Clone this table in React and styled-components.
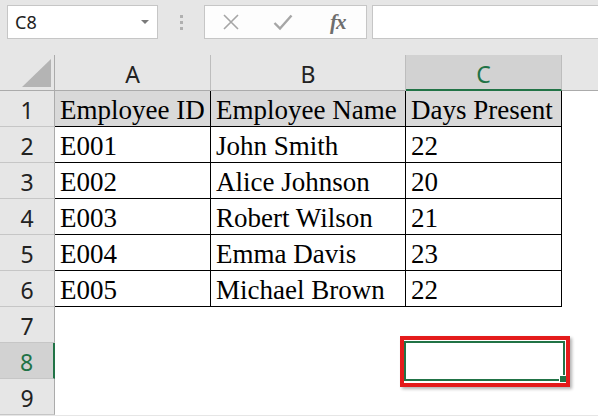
import React from 'react';
import styled, { createGlobalStyle } from 'styled-components';

const GREEN = '#217346';

const GlobalStyle = createGlobalStyle`
  html, body {
    margin: 0;
    padding: 0;
    background: #e6e6e6;
    overflow: hidden;
  }
`;

const Page = styled.div`
  width: 598px;
  height: 416px;
  background: #e6e6e6;
  font-family: "Noto Sans", "Liberation Sans", sans-serif;
`;

const Toolbar = styled.div`
  display: flex;
  align-items: center;
  height: 34px;
  padding: 5px 0 0 7px;
  margin-bottom: 16px;
`;

const NameBox = styled.div`
  box-sizing: border-box;
  width: 151px;
  height: 34px;
  background: #fff;
  border: 1px solid #c6c6c6;
  display: flex;
  align-items: center;
  justify-content: space-between;
  padding: 0 8px 0 7px;
  font-size: 18px;
  color: #222;
`;

const Caret = styled.span`
  width: 0;
  height: 0;
  border-left: 4px solid transparent;
  border-right: 4px solid transparent;
  border-top: 4px solid #7a7a7a;
`;

const Grip = styled.div`
  width: 46px;
  display: flex;
  flex-direction: column;
  align-items: center;
  gap: 3px;
`;

const GripDot = styled.span`
  width: 3px;
  height: 3px;
  background: #b0b0b0;
`;

const FxBox = styled.div`
  box-sizing: border-box;
  width: 163px;
  height: 34px;
  background: #fdfdfd;
  border: 1px solid #c6c6c6;
  display: flex;
  align-items: center;
  padding-left: 17px;
  gap: 33px;
`;

const FxLabel = styled.span`
  font-family: "Liberation Serif", serif;
  font-style: italic;
  font-weight: bold;
  font-size: 21px;
  color: #6e6e6e;
  margin-left: 4px;
  letter-spacing: -1px;
`;

const FormulaInput = styled.div`
  box-sizing: border-box;
  flex: 1;
  height: 34px;
  margin-left: 5px;
  margin-right: -2px;
  background: #fff;
  border: 1px solid #c6c6c6;
`;

const Grid = styled.div`
  display: grid;
  grid-template-columns: 55px 156px 195px 156px 1fr;
  grid-auto-rows: 36px;
`;

const Corner = styled.div`
  box-sizing: border-box;
  border-right: 1px solid #ababab;
  border-bottom: 1px solid #ababab;
  display: flex;
  align-items: flex-end;
  justify-content: flex-end;
  padding: 0 3px 3px 0;
`;

const Triangle = styled.span`
  width: 0;
  height: 0;
  border-left: 29px solid transparent;
  border-bottom: 28px solid #b4b4b4;
`;

const ColHead = styled.div`
  box-sizing: border-box;
  background: ${(p) => (p.$active ? '#d2d2d2' : '#e6e6e6')};
  color: ${(p) => (p.$active ? GREEN : '#222')};
  border-right: ${(p) => (p.$blank ? 'none' : '1px solid #bdbdbd')};
  border-bottom: ${(p) => (p.$active ? `2px solid ${GREEN}` : '1px solid #ababab')};
  display: flex;
  align-items: center;
  justify-content: center;
  padding-top: 3px;
  font-size: 23px;
`;

const RowHead = styled.div`
  box-sizing: border-box;
  background: ${(p) => (p.$active ? '#d2d2d2' : '#e6e6e6')};
  color: ${(p) => (p.$active ? GREEN : '#222')};
  border-right: ${(p) => (p.$active ? `2px solid ${GREEN}` : '1px solid #ababab')};
  border-bottom: 1px solid #c6c6c6;
  display: flex;
  align-items: center;
  justify-content: center;
  padding-top: 2px;
  font-size: 23px;
`;

const Cell = styled.div`
  box-sizing: border-box;
  position: relative;
  z-index: ${(p) => (p.$selected ? 2 : 'auto')};
  background: ${(p) => (p.$head ? '#d9d9d9' : '#fff')};
  border-right: ${(p) => (p.$data ? '1px solid #000' : 'none')};
  border-bottom: ${(p) => (p.$data ? '1px solid #000' : 'none')};
  display: flex;
  align-items: center;
  padding: 4px 0 0 5px;
  font-family: "Liberation Serif", "Times New Roman", serif;
  font-size: 27px;
  color: #000;
  white-space: nowrap;
`;

const Selection = styled.div`
  position: absolute;
  left: -2px;
  top: -2px;
  right: -3px;
  bottom: -2px;
  border: 2px solid ${GREEN};
  pointer-events: none;
`;

const Handle = styled.span`
  position: absolute;
  right: -3px;
  bottom: -3px;
  width: 6px;
  height: 6px;
  background: ${GREEN};
  border-left: 1px solid #fff;
  border-top: 1px solid #fff;
`;

const Highlight = styled.div`
  position: absolute;
  left: -6px;
  top: -7px;
  right: -8px;
  bottom: -8px;
  border: 4px solid #e41b1b;
  box-shadow: 2px 2px 3px rgba(0, 0, 0, 0.3);
  pointer-events: none;
`;

const headers = ['Employee ID', 'Employee Name', 'Days Present'];
const rows = [
  ['E001', 'John Smith', '22'],
  ['E002', 'Alice Johnson', '20'],
  ['E003', 'Robert Wilson', '21'],
  ['E004', 'Emma Davis', '23'],
  ['E005', 'Michael Brown', '22'],
];

const CloseIcon = () => (
  <svg width="18" height="18" viewBox="0 0 18 18">
    <path d="M2 2 L16 16 M16 2 L2 16" stroke="#a6a6a6" strokeWidth="1.6" fill="none" />
  </svg>
);

const CheckIcon = () => (
  <svg width="20" height="18" viewBox="0 0 20 18">
    <path d="M1.5 10 L7 15.5 L18.5 2.5" stroke="#a6a6a6" strokeWidth="2.4" fill="none" />
  </svg>
);

export default function App() {
  const sheet = [headers, ...rows];

  return (
    <Page>
      <GlobalStyle />
      <Toolbar>
        <NameBox>
          C8
          <Caret />
        </NameBox>
        <Grip>
          <GripDot />
          <GripDot />
          <GripDot />
        </Grip>
        <FxBox>
          <CloseIcon />
          <CheckIcon />
          <FxLabel>fx</FxLabel>
        </FxBox>
        <FormulaInput />
      </Toolbar>

      <Grid>
        <Corner>
          <Triangle />
        </Corner>
        <ColHead>A</ColHead>
        <ColHead>B</ColHead>
        <ColHead $active>C</ColHead>
        <ColHead $blank />

        {Array.from({ length: 9 }, (_, i) => {
          const r = i + 1;
          const values = sheet[i];
          return (
            <React.Fragment key={r}>
              <RowHead $active={r === 8}>{r}</RowHead>
              {[0, 1, 2].map((c) => {
                const selected = r === 8 && c === 2;
                return (
                  <Cell key={c} $data={!!values} $head={i === 0} $selected={selected}>
                    {values ? values[c] : ''}
                    {selected && (
                      <>
                        <Selection>
                          <Handle />
                        </Selection>
                        <Highlight />
                      </>
                    )}
                  </Cell>
                );
              })}
              <Cell />
            </React.Fragment>
          );
        })}
      </Grid>
    </Page>
  );
}
